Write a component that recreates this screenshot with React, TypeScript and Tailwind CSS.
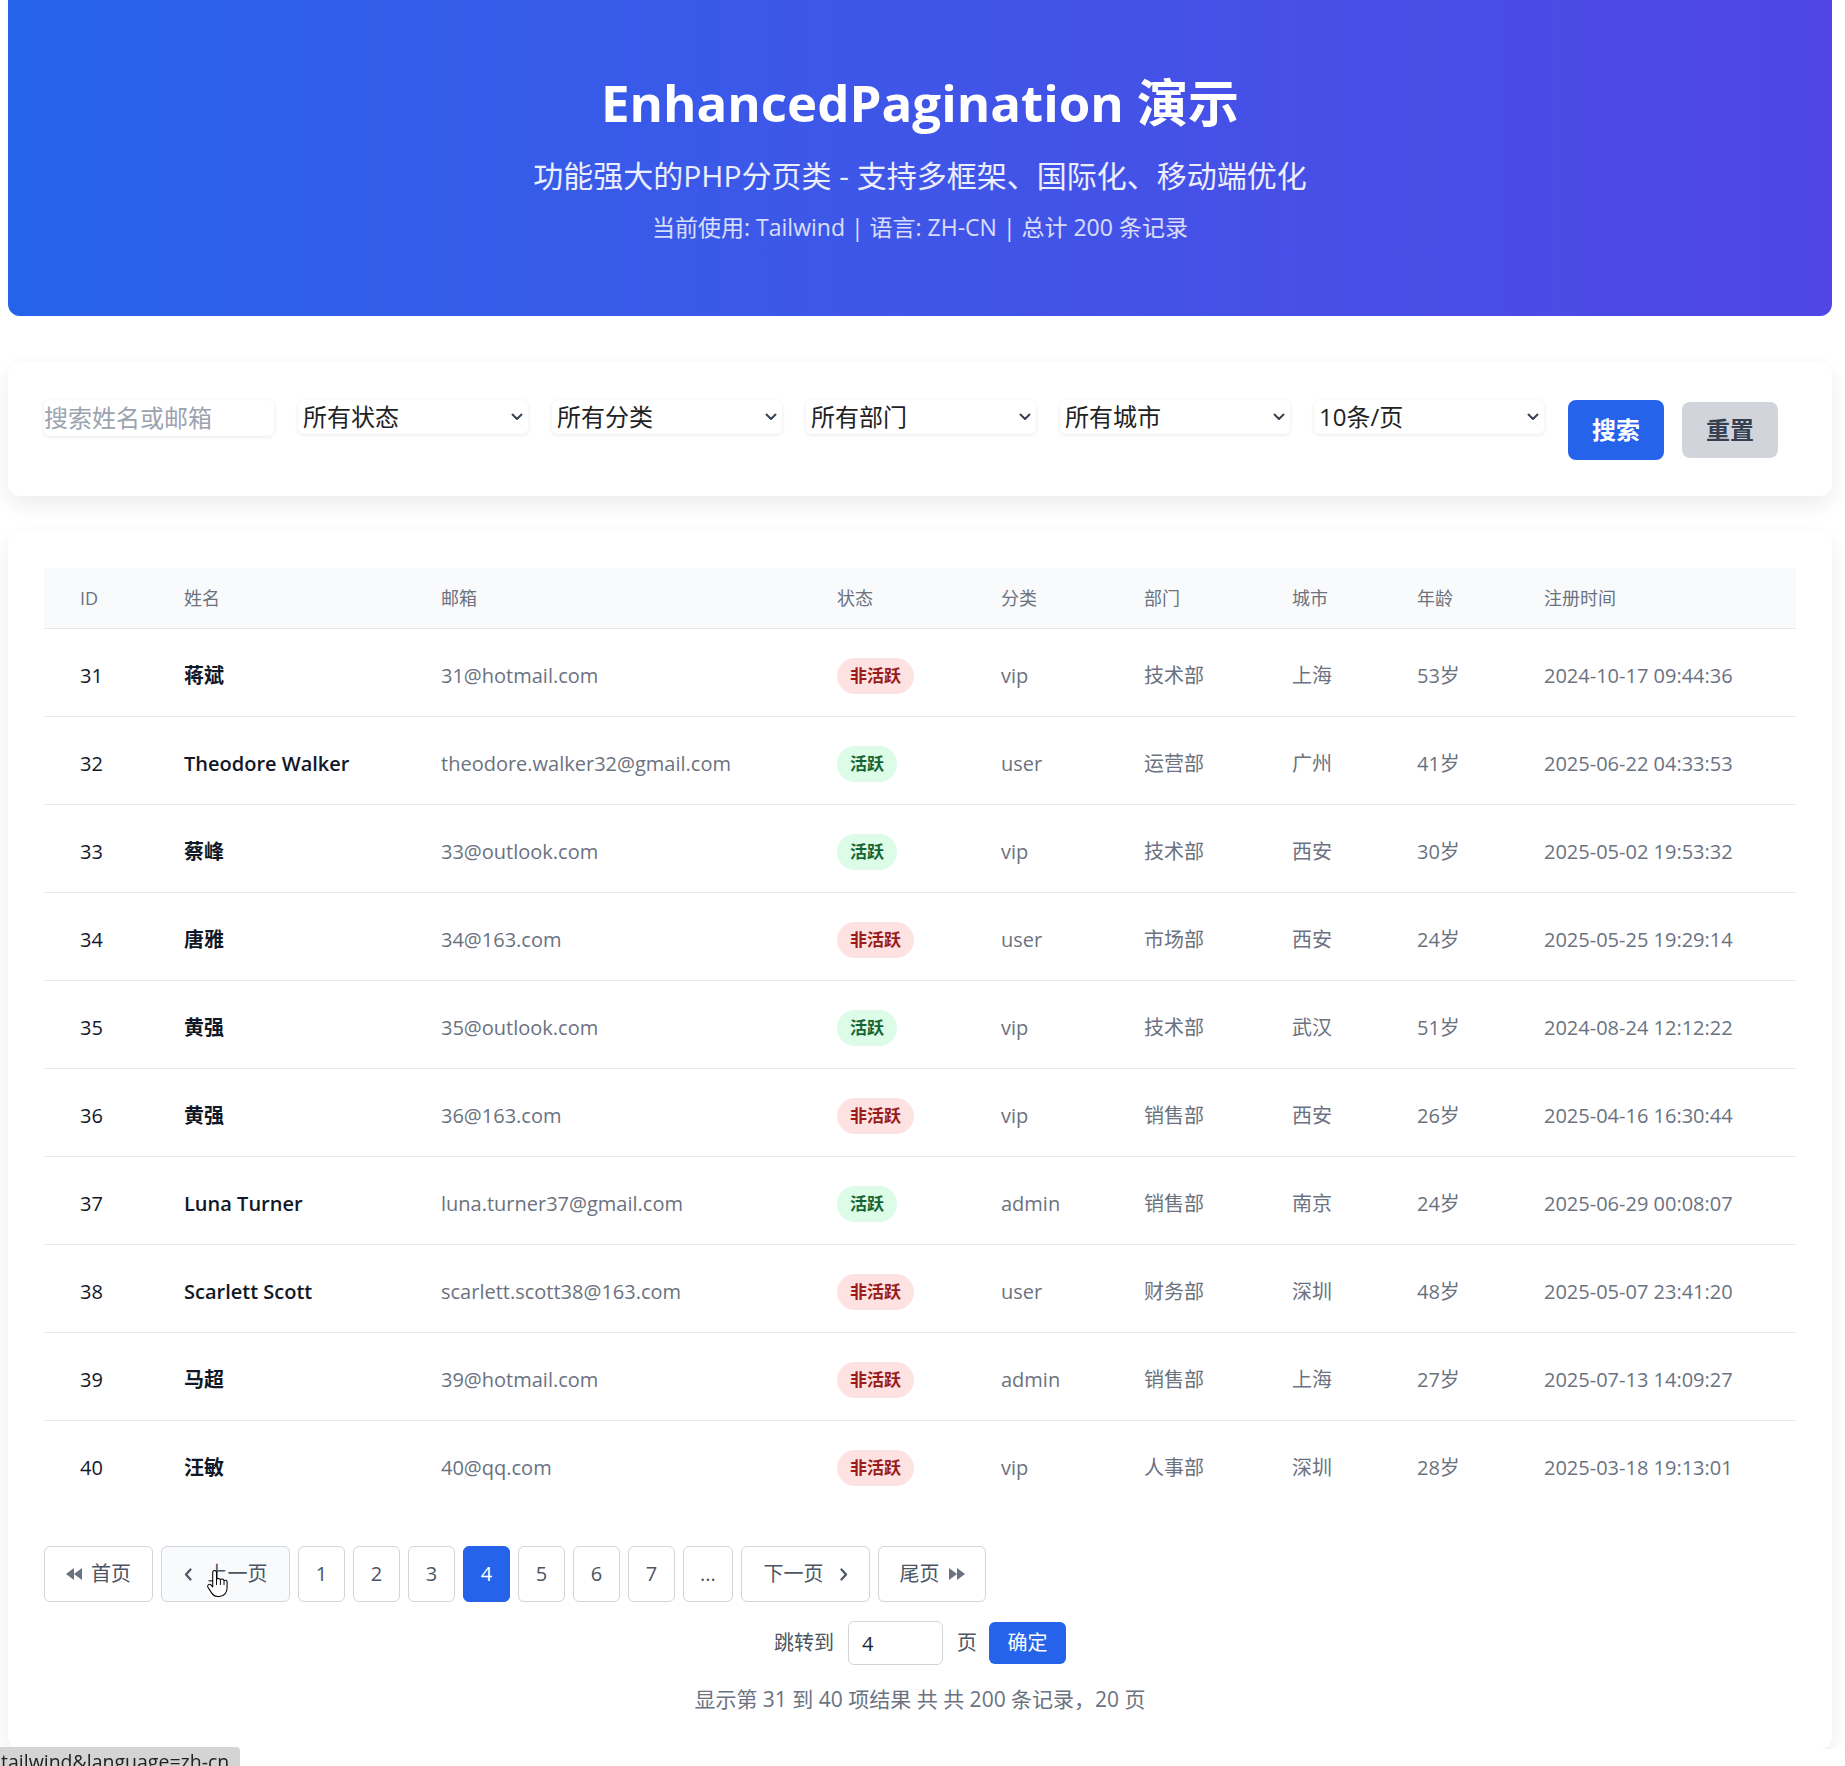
import React from "react";

type Row = {
  id: number;
  name: string;
  email: string;
  active: boolean;
  cat: string;
  dept: string;
  city: string;
  age: string;
  time: string;
};

const rows: Row[] = [
  { id: 31, name: "蒋斌", email: "31@hotmail.com", active: false, cat: "vip", dept: "技术部", city: "上海", age: "53岁", time: "2024-10-17 09:44:36" },
  { id: 32, name: "Theodore Walker", email: "theodore.walker32@gmail.com", active: true, cat: "user", dept: "运营部", city: "广州", age: "41岁", time: "2025-06-22 04:33:53" },
  { id: 33, name: "蔡峰", email: "33@outlook.com", active: true, cat: "vip", dept: "技术部", city: "西安", age: "30岁", time: "2025-05-02 19:53:32" },
  { id: 34, name: "唐雅", email: "34@163.com", active: false, cat: "user", dept: "市场部", city: "西安", age: "24岁", time: "2025-05-25 19:29:14" },
  { id: 35, name: "黄强", email: "35@outlook.com", active: true, cat: "vip", dept: "技术部", city: "武汉", age: "51岁", time: "2024-08-24 12:12:22" },
  { id: 36, name: "黄强", email: "36@163.com", active: false, cat: "vip", dept: "销售部", city: "西安", age: "26岁", time: "2025-04-16 16:30:44" },
  { id: 37, name: "Luna Turner", email: "luna.turner37@gmail.com", active: true, cat: "admin", dept: "销售部", city: "南京", age: "24岁", time: "2025-06-29 00:08:07" },
  { id: 38, name: "Scarlett Scott", email: "scarlett.scott38@163.com", active: false, cat: "user", dept: "财务部", city: "深圳", age: "48岁", time: "2025-05-07 23:41:20" },
  { id: 39, name: "马超", email: "39@hotmail.com", active: false, cat: "admin", dept: "销售部", city: "上海", age: "27岁", time: "2025-07-13 14:09:27" },
  { id: 40, name: "汪敏", email: "40@qq.com", active: false, cat: "vip", dept: "人事部", city: "深圳", age: "28岁", time: "2025-03-18 19:13:01" },
];

function Chevron() {
  return (
    <svg width="12" height="8" viewBox="0 0 12 8">
      <path d="M1.5 1.5 L6 6 L10.5 1.5" fill="none" stroke="#374151" strokeWidth="2" strokeLinecap="round" strokeLinejoin="round" />
    </svg>
  );
}

function SelectBox({ label }: { label: string }) {
  return (
    <div className="relative w-[230px] h-[34px] rounded-md bg-white shadow-[0_1px_4px_rgba(0,0,0,0.09)]">
      <div className="pl-[5px] text-[24px] leading-[34px] text-[#222222]">{label}</div>
      <span className="absolute right-[5px] top-[13px] flex">
        <Chevron />
      </span>
    </div>
  );
}

function DoubleLeft() {
  return (
    <svg width="16" height="12" viewBox="0 0 16 12">
      <path d="M8 0 L0 6 L8 12 Z M16 0 L8 6 L16 12 Z" fill="#6b7280" />
    </svg>
  );
}
function DoubleRight() {
  return (
    <svg width="16" height="12" viewBox="0 0 16 12">
      <path d="M0 0 L8 6 L0 12 Z M8 0 L16 6 L8 12 Z" fill="#6b7280" />
    </svg>
  );
}
function ChevLeft() {
  return (
    <svg width="8" height="13" viewBox="0 0 8 13">
      <path d="M6.5 1.5 L2 6.5 L6.5 11.5" fill="none" stroke="#4b5563" strokeWidth="2.2" strokeLinecap="round" strokeLinejoin="round" />
    </svg>
  );
}
function ChevRight() {
  return (
    <svg width="8" height="13" viewBox="0 0 8 13">
      <path d="M1.5 1.5 L6 6.5 L1.5 11.5" fill="none" stroke="#4b5563" strokeWidth="2.2" strokeLinecap="round" strokeLinejoin="round" />
    </svg>
  );
}

function HandCursor() {
  return (
    <svg width="23" height="30" viewBox="0 0 24 30">
      <path
        d="M7 14 V3.2 C7 1.9 8 1 9 1 C10 1 11 1.9 11 3.2 V10.5 C11.3 9.7 12 9.3 13 9.3 C14 9.3 14.8 10 15 10.8 C15.3 10.2 16 9.8 16.8 9.8 C17.9 9.8 18.7 10.6 18.8 11.6 C19.1 11.2 19.7 11 20.2 11 C21.2 11 22 11.8 22 12.9 V19 C22 24 19 28 14 28 H12 C9 28 7.5 26.8 6 24.5 L2 18.3 C1.4 17.3 1.7 16.2 2.6 15.6 C3.5 15 4.6 15.3 5.3 16.1 L7 18 Z"
        fill="#ffffff"
        stroke="#000000"
        strokeWidth="1.1"
        strokeLinejoin="round"
      />
      <path d="M11 10.5 V16 M15 10.8 V16 M18.8 11.6 V16" stroke="#000000" strokeWidth="1" fill="none" />
    </svg>
  );
}

export default function App() {
  const pageBtn =
    "h-[56px] border border-[#d1d5db] rounded-md text-[20px] text-[#4b5563] flex items-center justify-center bg-white";
  const td = "pl-[36px] pt-[7px] text-[20px]";
  return (
    <div
      className="min-h-0 bg-white text-[#111827]"
      style={{ fontFamily: '"Open Sans", "Noto Sans CJK SC", sans-serif' }}
    >
      <div className="ml-[8px] w-[1824px]">
        {/* Header */}
        <div className="h-[316px] rounded-b-[12px] bg-gradient-to-r from-[#2563eb] to-[#4f46e5] pt-[72px] text-center text-white">
          <h1 className="text-[51px] font-bold leading-[60px]">EnhancedPagination 演示</h1>
          <p className="mt-[24px] text-[30px] leading-[40px] text-white/90">
            功能强大的PHP分页类 - 支持多框架、国际化、移动端优化
          </p>
          <p className="mt-[16px] text-[23px] leading-[30px] text-white/80">
            当前使用: Tailwind | 语言: ZH-CN | 总计 200 条记录
          </p>
        </div>

        {/* Filters */}
        <div className="mt-[46px] h-[134px] rounded-[12px] bg-white shadow-[0_8px_20px_rgba(0,0,0,0.08)] pl-[36px] pt-[38px]">
          <div className="flex items-start gap-[24px]">
            <input
              className="w-[230px] h-[36px] p-0 rounded-md bg-white text-[24px] text-[#222222] placeholder:text-[#9ca3af] shadow-[0_1px_4px_rgba(0,0,0,0.09)] outline-none"
              placeholder="搜索姓名或邮箱"
            />
            <SelectBox label="所有状态" />
            <SelectBox label="所有分类" />
            <SelectBox label="所有部门" />
            <SelectBox label="所有城市" />
            <SelectBox label="10条/页" />
            <div className="flex items-start gap-[18px]">
              <button className="w-[96px] h-[60px] rounded-lg bg-[#2563eb] text-white text-[24px] font-bold">搜索</button>
              <button className="mt-[2px] w-[96px] h-[56px] rounded-lg bg-[#d1d5db] text-[#374151] text-[24px] font-semibold">重置</button>
            </div>
          </div>
        </div>

        {/* Table card */}
        <div className="mt-[36px] rounded-[12px] bg-white shadow-[0_8px_20px_rgba(0,0,0,0.08)] px-[36px] pt-[36px] pb-[36px]">
          <table className="w-[1752px] table-fixed border-collapse">
            <colgroup>
              <col className="w-[104px]" />
              <col className="w-[257px]" />
              <col className="w-[396px]" />
              <col className="w-[164px]" />
              <col className="w-[143px]" />
              <col className="w-[148px]" />
              <col className="w-[125px]" />
              <col className="w-[127px]" />
              <col className="w-[288px]" />
            </colgroup>
            <thead>
              <tr className="h-[60px] bg-[#f9fafb] border-b border-[#e5e7eb]">
                {["ID", "姓名", "邮箱", "状态", "分类", "部门", "城市", "年龄", "注册时间"].map((h) => (
                  <th key={h} className="pl-[36px] pt-[2px] text-left text-[18px] font-normal text-[#6b7280]">
                    {h}
                  </th>
                ))}
              </tr>
            </thead>
            <tbody>
              {rows.map((r, i) => (
                <tr key={r.id} className={i < rows.length - 1 ? "h-[88px] border-b border-[#e5e7eb]" : "h-[88px]"}>
                  <td className={td + " text-[#111827]"}>{r.id}</td>
                  <td className={td + " font-semibold text-[#111827]"}>{r.name}</td>
                  <td className={td + " text-[#6b7280]"}>{r.email}</td>
                  <td className="pl-[36px] pt-[7px]">
                    {r.active ? (
                      <span className="inline-flex h-[36px] items-center rounded-full bg-[#dcfce7] px-[13px] text-[17px] font-bold text-[#166534]">
                        活跃
                      </span>
                    ) : (
                      <span className="inline-flex h-[36px] items-center rounded-full bg-[#fee2e2] px-[13px] text-[17px] font-bold text-[#991b1b]">
                        非活跃
                      </span>
                    )}
                  </td>
                  <td className={td + " text-[#6b7280]"}>{r.cat}</td>
                  <td className={td + " text-[#6b7280]"}>{r.dept}</td>
                  <td className={td + " text-[#6b7280]"}>{r.city}</td>
                  <td className={td + " text-[#6b7280]"}>{r.age}</td>
                  <td className={td + " text-[#6b7280]"}>{r.time}</td>
                </tr>
              ))}
            </tbody>
          </table>

          {/* Pagination */}
          <div className="mt-[38px] flex gap-[8px]">
            <div className={pageBtn + " w-[109px] gap-[9px]"}>
              <DoubleLeft />
              <span>首页</span>
            </div>
            <div className="relative">
              <div className="h-[56px] border border-[#d1d5db] rounded-md text-[20px] text-[#4b5563] flex items-center justify-center bg-[#f9fafb] w-[129px] gap-[16px]">
                <ChevLeft />
                <span>上一页</span>
              </div>
              <span className="absolute left-[45px] top-[23px] flex">
                <HandCursor />
              </span>
            </div>
            <div className={pageBtn + " w-[47px]"}>1</div>
            <div className={pageBtn + " w-[47px]"}>2</div>
            <div className={pageBtn + " w-[47px]"}>3</div>
            <div className="h-[56px] w-[47px] rounded-md border border-[#2563eb] bg-[#2563eb] text-[20px] text-white flex items-center justify-center">4</div>
            <div className={pageBtn + " w-[47px]"}>5</div>
            <div className={pageBtn + " w-[47px]"}>6</div>
            <div className={pageBtn + " w-[47px]"}>7</div>
            <div className={pageBtn + " w-[50px]"}>...</div>
            <div className={pageBtn + " w-[129px] gap-[16px]"}>
              <span>下一页</span>
              <ChevRight />
            </div>
            <div className={pageBtn + " w-[108px] gap-[9px]"}>
              <span>尾页</span>
              <DoubleRight />
            </div>
          </div>

          {/* Jump */}
          <div className="mt-[19px] flex items-center justify-center">
            <span className="text-[20px] text-[#4b5563]">跳转到</span>
            <input
              defaultValue="4"
              className="ml-[14px] h-[44px] w-[95px] rounded-md border border-[#d1d5db] pl-[13px] text-[20px] text-[#1f2937] outline-none"
            />
            <span className="ml-[14px] text-[20px] text-[#4b5563]">页</span>
            <button className="ml-[12px] h-[42px] w-[77px] rounded-md bg-[#2563eb] text-[20px] text-white">确定</button>
          </div>

          {/* Summary */}
          <div className="mt-[20px] text-center text-[21px] leading-[28px] text-[#6b7280]">
            显示第 31 到 40 项结果 共 共 200 条记录，20 页
          </div>
        </div>
      </div>

      {/* Browser status bubble */}
      <div className="fixed bottom-0 left-0 h-[19px] w-[240px] overflow-hidden rounded-tr-[4px] bg-[#d4d4d4] pl-[1px]">
        <span className="block whitespace-nowrap pt-[6px] text-[19.5px] leading-[18px] text-[#222222]">
          tailwind&amp;language=zh-cn
        </span>
      </div>
    </div>
  );
}
